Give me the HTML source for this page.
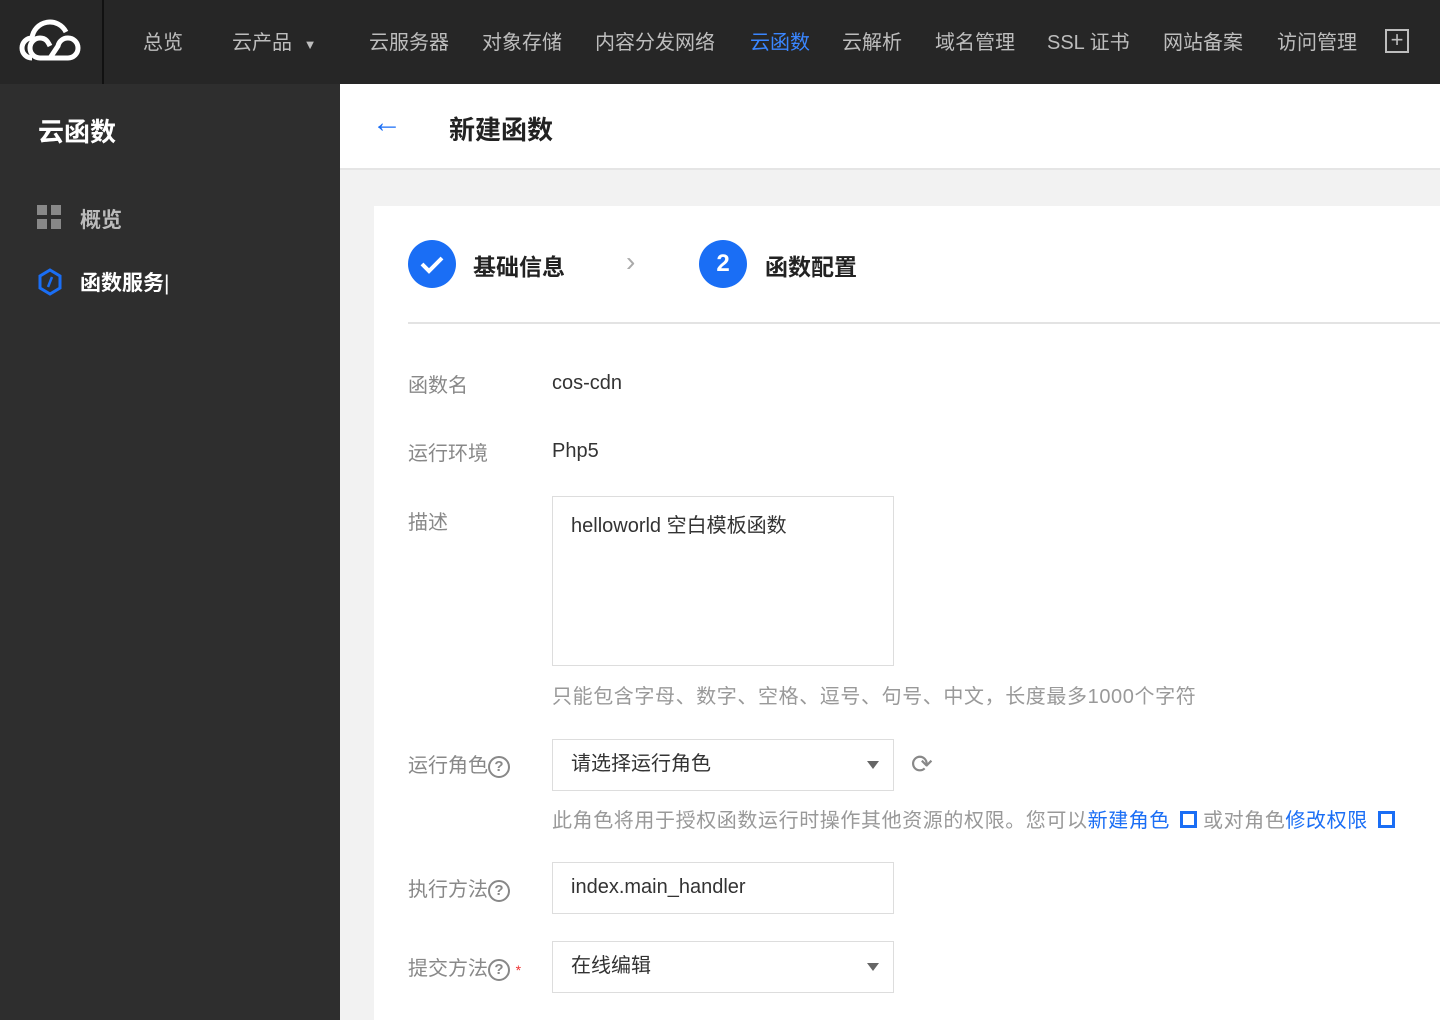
<!DOCTYPE html><html><head><meta charset="utf-8"><style>
*{margin:0;padding:0;box-sizing:border-box}
body{width:1440px;height:1020px;overflow:hidden;font-family:"Liberation Sans","Noto Sans CJK SC",sans-serif;background:#f2f2f2;position:relative}
.top{position:absolute;left:0;top:0;width:1440px;height:84px;background:#262626}
.logo{position:absolute;left:0;top:0;width:104px;height:84px;border-right:2px solid #111}
.nav{position:absolute;top:26px;font-size:20px;color:#bdbdbd;white-space:nowrap}
.side{position:absolute;left:0;top:84px;width:340px;height:936px;background:#2e2e2e}
.hdr{position:absolute;left:340px;top:84px;width:1100px;height:86px;background:#fff;border-bottom:2px solid #e5e5e5}
.card{position:absolute;left:374px;top:206px;width:1066px;height:814px;background:#fff}
.lbl{position:absolute;left:408px;font-size:20px;color:#888}
.val{position:absolute;left:552px;font-size:20px;color:#333}
.box{position:absolute;left:552px;width:342px;border:1.5px solid #ddd;background:#fff;font-size:20px;color:#333;padding-left:18px}
.tip{position:absolute;left:552px;font-size:20px;color:#999;white-space:nowrap;letter-spacing:0.6px}
.q{display:inline-block;width:22px;height:22px;border:2px solid #888;border-radius:50%;font-size:15px;text-align:center;line-height:18px;color:#888;vertical-align:1px;font-weight:bold;letter-spacing:0}
.tri{position:absolute;right:14px;top:21px;border:6px solid transparent;border-top:8px solid #666}
a{color:#1a6ef5;text-decoration:none}
.ext{display:inline-block;width:17px;height:17px;border:3px solid #1a6ef5;vertical-align:-1px;margin:0 6px 0 10px}
</style></head><body>
<div class="top">
<div class="logo"><svg width="104" height="84" viewBox="0 0 104 84"><g fill="none" stroke="#fff" stroke-width="5"><path d="M32 58a10 10 0 0 1 0-20a18 18 0 0 1 34-6"/><path d="M40 58h28a10 10 0 0 0 0-20a10 10 0 0 0-10 8l-8 12"/><path d="M40 58a10 10 0 0 1 0-20c6 0 8 4 10 8"/></g></svg></div>
<div class="nav" style="left:143px">总览</div>
<div class="nav" style="left:232px">云产品 <span style="font-size:13px;margin-left:6px">▼</span></div>
<div class="nav" style="left:369px">云服务器</div>
<div class="nav" style="left:482px">对象存储</div>
<div class="nav" style="left:595px">内容分发网络</div>
<div class="nav" style="left:750px;color:#3a86ff">云函数</div>
<div class="nav" style="left:842px">云解析</div>
<div class="nav" style="left:935px">域名管理</div>
<div class="nav" style="left:1047px">SSL 证书</div>
<div class="nav" style="left:1163px">网站备案</div>
<div class="nav" style="left:1277px">访问管理</div>
<div style="position:absolute;left:1385px;top:29px;width:24px;height:24px;border:2px solid #bdbdbd;color:#bdbdbd;font-size:22px;line-height:18px;text-align:center">+</div>
</div>
<div class="side">
<div style="position:absolute;left:38px;top:28px;font-size:26px;font-weight:bold;color:#fff">云函数</div>
<svg style="position:absolute;left:37px;top:121px" width="25" height="25"><g fill="#888"><rect x="0" y="0" width="10" height="10"/><rect x="14" y="0" width="10" height="10"/><rect x="0" y="14" width="10" height="10"/><rect x="14" y="14" width="10" height="10"/></g></svg>
<div style="position:absolute;left:80px;top:120px;font-size:21px;font-weight:bold;color:#bbb">概览</div>
<svg style="position:absolute;left:37px;top:184px" width="26" height="28"><path d="M13 2l10 6v12l-10 6l-10-6V8z" fill="none" stroke="#1a6ef5" stroke-width="3"/><path d="M15 9l-4 10" stroke="#1a6ef5" stroke-width="2.5"/></svg>
<div style="position:absolute;left:80px;top:183px;font-size:21px;font-weight:bold;color:#fff">函数服务<span style="font-weight:normal">|</span></div>
</div>
<div class="hdr">
<div style="position:absolute;left:32px;top:22px;font-size:30px;color:#1a6ef5">←</div>
<div style="position:absolute;left:109px;top:26px;font-size:26px;font-weight:bold;color:#222">新建函数</div>
</div>
<div class="card"></div>
<div style="position:absolute;left:408px;top:240px;width:48px;height:48px;border-radius:50%;background:#1a6ef5"><svg width="48" height="48"><path d="M14 24l7 7l13-13" fill="none" stroke="#fff" stroke-width="4"/></svg></div>
<div style="position:absolute;left:473px;top:248px;font-size:23px;font-weight:bold;color:#222">基础信息</div>
<div style="position:absolute;left:626px;top:246px;font-size:28px;color:#aaa">›</div>
<div style="position:absolute;left:699px;top:240px;width:48px;height:48px;border-radius:50%;background:#1a6ef5;color:#fff;font-size:24px;font-weight:bold;text-align:center;line-height:48px">2</div>
<div style="position:absolute;left:765px;top:248px;font-size:23px;font-weight:bold;color:#222">函数配置</div>
<div style="position:absolute;left:408px;top:322px;width:1032px;height:2px;background:#e3e3e3"></div>
<div class="lbl" style="top:369px">函数名</div><div class="val" style="top:372px">cos-cdn</div>
<div class="lbl" style="top:437px">运行环境</div><div class="val" style="top:440px">Php5</div>
<div class="lbl" style="top:506px">描述</div>
<div class="box" style="top:496px;height:170px;padding-top:12px">helloworld 空白模板函数</div>
<div class="tip" style="top:680px">只能包含字母、数字、空格、逗号、句号、中文，长度最多1000个字符</div>
<div class="lbl" style="top:749px">运行角色<span class="q">?</span></div>
<div class="box" style="top:739px;height:52px;line-height:49px">请选择运行角色<span class="tri"></span></div>
<div style="position:absolute;left:911px;top:749px;font-size:26px;color:#888">⟳</div>
<div class="tip" style="top:804px">此角色将用于授权函数运行时操作其他资源的权限。您可以<a>新建角色</a><span class="ext"></span>或对角色<a>修改权限</a><span class="ext"></span></div>
<div class="lbl" style="top:873px">执行方法<span class="q">?</span></div>
<div class="box" style="top:862px;height:52px;line-height:49px">index.main_handler</div>
<div class="lbl" style="top:952px">提交方法<span class="q">?</span> <span style="color:#e33;font-size:14px">*</span></div>
<div class="box" style="top:941px;height:52px;line-height:49px">在线编辑<span class="tri"></span></div>
</body></html>
